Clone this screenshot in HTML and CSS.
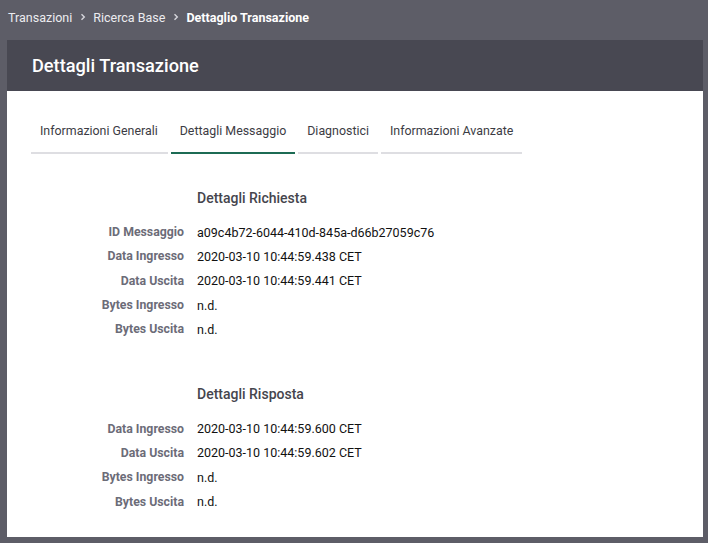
FILE: index.html
```html
<!DOCTYPE html>
<html lang="it">
<head>
<meta charset="utf-8">
<title>Dettagli Transazione</title>
<link rel="stylesheet" href="styles.css">
</head>
<body>
<nav class="breadcrumb">
  <span class="crumb">Transazioni</span>
  <span class="sep"><svg width="8" height="8" viewBox="0 0 8 8"><path d="M2.5 1.2 L5.3 4 L2.5 6.8" fill="none" stroke="#d6d6dc" stroke-width="1.4"/></svg></span>
  <span class="crumb">Ricerca Base</span>
  <span class="sep"><svg width="8" height="8" viewBox="0 0 8 8"><path d="M2.5 1.2 L5.3 4 L2.5 6.8" fill="none" stroke="#d6d6dc" stroke-width="1.4"/></svg></span>
  <span class="crumb current">Dettaglio Transazione</span>
</nav>
<main class="card">
  <header class="card-header">Dettagli Transazione</header>
  <section class="card-body">
    <div class="tabs">
      <div class="tab">Informazioni Generali</div>
      <div class="tab active">Dettagli Messaggio</div>
      <div class="tab">Diagnostici</div>
      <div class="tab">Informazioni Avanzate</div>
    </div>
    <div class="details">
      <div class="title">Dettagli Richiesta</div>
      <div class="rows">
        <div class="label">ID Messaggio</div><div class="value">a09c4b72-6044-410d-845a-d66b27059c76</div>
        <div class="label">Data Ingresso</div><div class="value">2020-03-10 10:44:59.438 CET</div>
        <div class="label">Data Uscita</div><div class="value">2020-03-10 10:44:59.441 CET</div>
        <div class="label">Bytes Ingresso</div><div class="value">n.d.</div>
        <div class="label">Bytes Uscita</div><div class="value">n.d.</div>
      </div>
    </div>
    <div class="details second">
      <div class="title">Dettagli Risposta</div>
      <div class="rows">
        <div class="label">Data Ingresso</div><div class="value">2020-03-10 10:44:59.600 CET</div>
        <div class="label">Data Uscita</div><div class="value">2020-03-10 10:44:59.602 CET</div>
        <div class="label">Bytes Ingresso</div><div class="value">n.d.</div>
        <div class="label">Bytes Uscita</div><div class="value">n.d.</div>
      </div>
    </div>
  </section>
</main>
</body>
</html>
```
FILE: styles.css
```css
* { box-sizing: border-box; }
html, body { margin: 0; padding: 0; }
body {
  background: #5d5d67;
  font-family: Roboto, "Liberation Sans", sans-serif;
  width: 708px;
  height: 543px;
  overflow: hidden;
}
.breadcrumb {
  height: 40px;
  display: flex;
  align-items: center;
  padding: 0 0 6px 8px;
  font-size: 12.5px;
  color: #ececf0;
}
.sep {
  display: flex;
  align-items: center;
  margin: 0 6px 0 7px;
}
.crumb.current { font-weight: 700; color: #ffffff; }
.card {
  margin: 0 5px 0 7px;
  height: 497px;
  display: flex;
  flex-direction: column;
}
.card-header {
  height: 51px;
  background: #484852;
  color: #ffffff;
  font-size: 18.2px;
  font-weight: 500;
  display: flex;
  align-items: center;
  padding: 0 0 1px 25px;
}
.card-body {
  background: #ffffff;
  height: 446px;
  padding: 24px 0 0 24px;
}
.tabs {
  display: flex;
  gap: 3px;
}
.tab {
  font-size: 12.4px;
  line-height: 16px;
  white-space: nowrap;
  color: #3c3c44;
  padding: 8px 9px 13px 9px;
  border-bottom: 2px solid #dedee2;
}
.tab:first-child { padding-right: 10px; }
.tab.active { border-bottom-color: #1c6b54; }
.details {
  margin-top: 34px;
}
.details.second { margin-top: 43px; }
.title {
  margin-left: 166px;
  font-size: 14px;
  font-weight: 500;
  line-height: 20px;
  color: #45454d;
  margin-bottom: 12px;
}
.rows {
  display: grid;
  grid-template-columns: 153px 1fr;
  column-gap: 13px;
  grid-auto-rows: 24.3px;
  align-items: center;
}
.label {
  text-align: right;
  font-size: 12.3px;
  font-weight: 700;
  color: #6c6c78;
}
.value {
  font-size: 12.5px;
  color: #111111;
}
```
